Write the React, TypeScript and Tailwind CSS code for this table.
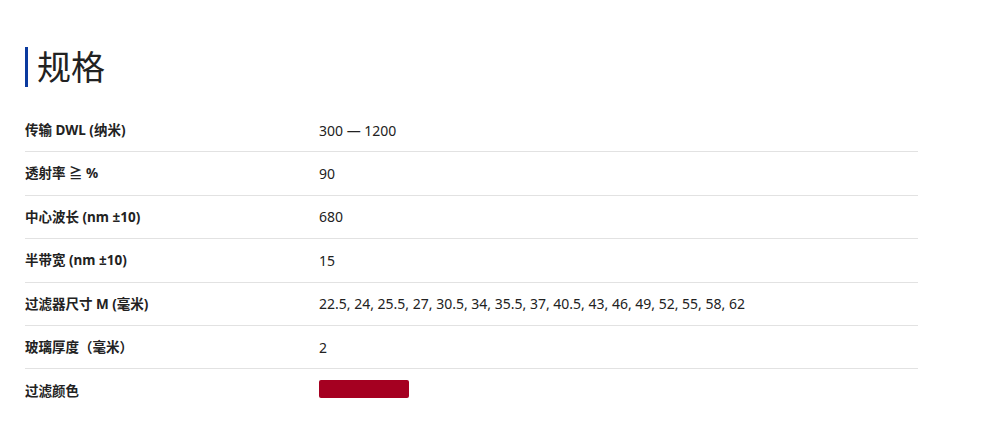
import React from "react";

const rows: { label: string; value: string | null }[] = [
  { label: "传输 DWL (纳米)", value: "300 — 1200" },
  { label: "透射率 ≧ %", value: "90" },
  { label: "中心波长 (nm ±10)", value: "680" },
  { label: "半带宽 (nm ±10)", value: "15" },
  { label: "过滤器尺寸 M (毫米)", value: "22.5, 24, 25.5, 27, 30.5, 34, 35.5, 37, 40.5, 43, 46, 49, 52, 55, 58, 62" },
  { label: "玻璃厚度（毫米）", value: "2" },
  { label: "过滤颜色", value: null },
];

export default function App() {
  return (
    <div
      className="w-[1003px] h-[442px] bg-white pl-[25px] pt-[47px] text-[#222]"
      style={{ fontFamily: '"Noto Sans", "Noto Sans CJK SC", sans-serif' }}
    >
      <div className="flex items-center h-[40px] border-l-[3px] border-[#0b3a9e] pl-[9px]">
        <h2 className="text-[34px] leading-none font-normal text-[#222]">规格</h2>
      </div>
      <div className="w-[893px] mt-[22px]">
        {rows.map((r, i) => (
          <div
            key={i}
            className={`flex items-center h-[43.4px] text-[14px] ${i < rows.length - 1 ? "border-b border-[#e2e2e2]" : ""}`}
          >
            <div className="w-[294px] font-bold text-[13.5px]">{r.label}</div>
            <div className="flex-1">
              {r.value !== null ? (
                r.value
              ) : (
                <div className="w-[90px] h-[18px] rounded-[2px] bg-[#a50021] -mt-[5px]" />
              )}
            </div>
          </div>
        ))}
      </div>
    </div>
  );
}
